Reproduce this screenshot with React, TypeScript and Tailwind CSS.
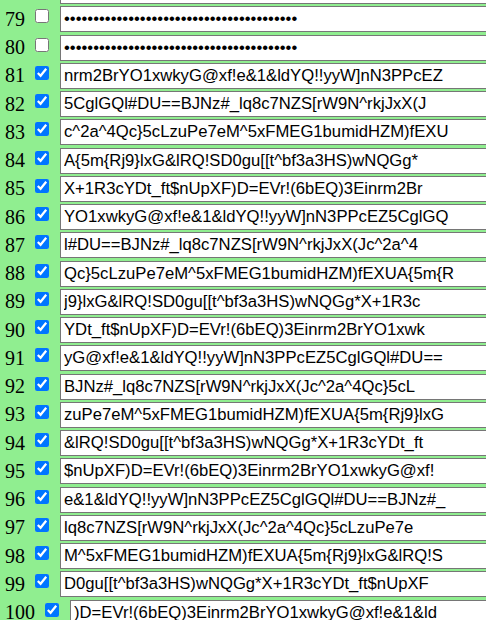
import React from "react";

// Repeating seed used to fill the generated fields.
const SEED =
  "nrm2BrYO1xwkyG@xf!e&1&ldYQ!!yyW]nN3PPcEZ" +
  "5CglGQl#DU==BJNz#_lq8c7NZS[rW9N^rkjJxX(J" +
  "c^2a^4Qc}5cLzuPe7eM^5xFMEG1bumidHZM)fEXU" +
  "A{5m{Rj9}lxG&lRQ!SD0gu[[t^bf3a3HS)wNQGg*" +
  "X+1R3cYDt_ft$nUpXF)D=EVr!(6bEQ)3Ei";

const LONG = SEED.repeat(6);

type Row = { n: number; checked: boolean; secret: boolean; value: string };

const rows: Row[] = [];
for (let n = 78; n <= 100; n++) {
  const secret = n <= 80;
  const value = secret
    ? "x".repeat(40)
    : LONG.slice((n - 81) * 40, (n - 81) * 40 + 40);
  rows.push({ n, checked: n >= 81, secret, value });
}

function FieldRow({ row }: { row: Row }) {
  return (
    <div className="flex h-[28.25px] items-center pl-[5px]">
      <span className="text-[20px] leading-[23px] text-black [font-family:'Liberation_Serif',serif]">
        {row.n}
      </span>
      <input
        type="checkbox"
        defaultChecked={row.checked}
        className="ml-[10px] h-[14px] w-[14px] shrink-0 self-start mt-[4px]"
      />
      <input
        type={row.secret ? "password" : "text"}
        defaultValue={row.value}
        className="ml-[11px] h-[26px] w-[440px] shrink-0 border border-[#767676] bg-white px-[3px] text-[16.67px] text-black [font-family:'Liberation_Sans',Arial,sans-serif] outline-none"
      />
    </div>
  );
}

export default function App() {
  return (
    <div className="h-[620px] w-full overflow-hidden bg-[#90ee90]">
      <div className="-mt-[23px]">
        {rows.map((r) => (
          <FieldRow key={r.n} row={r} />
        ))}
      </div>
    </div>
  );
}
